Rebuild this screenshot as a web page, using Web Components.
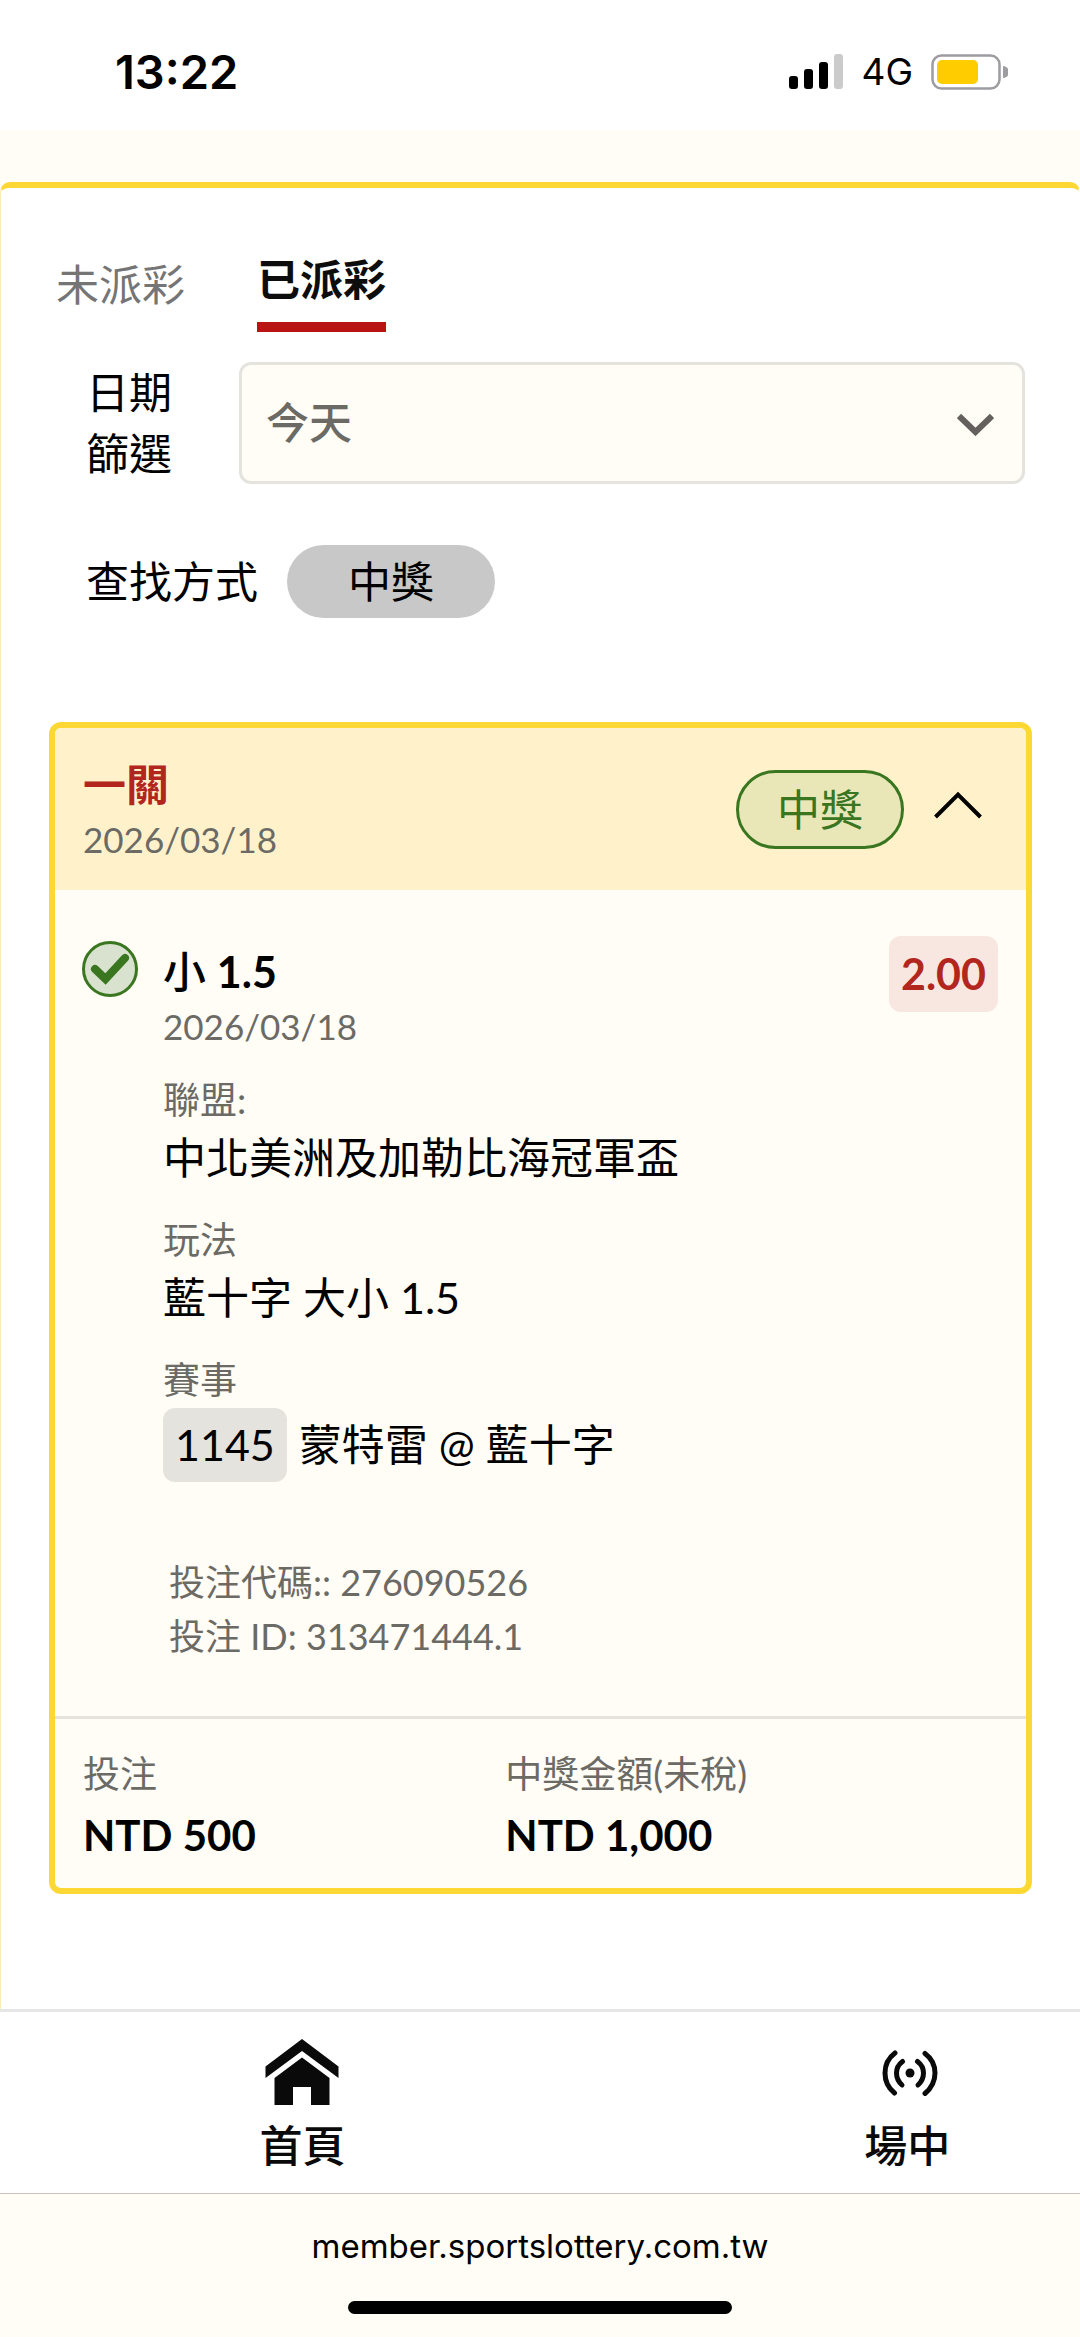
<!DOCTYPE html>
<html lang="zh-Hant">
<head>
<meta charset="utf-8">
<meta name="viewport" content="width=device-width, initial-scale=1">
<title>投注紀錄</title>
<style>
    html {
        background-color: #fffdf6;
    }

    body {
        margin: 0;
        min-height: 100vh;
        display: flex;
        flex-direction: column;
        overflow-x: hidden;
        font-family: Lato, 'Noto Sans CJK TC', sans-serif;
        font-size: 43px;
        line-height: 60px;
        color: black;
        --yellow: #fdd835;
        --cream: #fffdf6;
        --green: #39761f;
        --red: #b3261e;
        --grey: #6b6a65;
        --line: #e4e3de;
    }
</style>
</head>
<body>
    <status-bar time="13:22" network="4G"></status-bar>

    <bet-panel>
        <bet-tabs slot="tabs">
            <bet-tab>未派彩</bet-tab>
            <bet-tab selected>已派彩</bet-tab>
        </bet-tabs>

        <date-filter slot="filters" label="日期篩選" value="今天"></date-filter>
        <search-filter slot="filters" label="查找方式">中獎</search-filter>

        <bet-card title-text="一關" date="2026/03/18" status="中獎">
            <bet-selection date="2026/03/18" odds="2.00">
                <span slot="title">小 <b>1.5</b></span>
                <bet-field label="聯盟:">中北美洲及加勒比海冠軍盃</bet-field>
                <bet-field label="玩法">藍十字 大小 1.5</bet-field>
                <bet-field label="賽事" code="1145">蒙特雷 @ 藍十字</bet-field>
                <div slot="codes">投注代碼:: 276090526</div>
                <div slot="codes">投注 ID: 313471444.1</div>
            </bet-selection>
            <bet-amount slot="footer" label="投注">NTD 500</bet-amount>
            <bet-amount slot="footer" label="中獎金額(未稅)">NTD 1,000</bet-amount>
        </bet-card>
    </bet-panel>

    <nav-bar>
        <nav-item href="#home">
            <svg slot="icon" width="74" height="67" viewBox="0 0 74 67" fill="#0a0a0a" aria-hidden="true">
                <path d="M37 0 73.500 27.500V39L37 12 .5 39V27.500z"/>
                <path d="M37 18.500 64.500 39V66H46V48H28V66H9.500V39z"/>
            </svg>
            首頁
        </nav-item>
        <nav-item href="#live">
            <svg slot="icon" width="62" height="46" viewBox="-6 0 62 46" fill="none" stroke="#0a0a0a" stroke-width="5" stroke-linecap="round" aria-hidden="true">
                <circle cx="28" cy="23" r="4.500" fill="#0a0a0a" stroke="none"/>
                <path d="M20.500 11.500Q14.500 16 14.500 23T20 35M35.500 11.500Q41.500 16 41.500 23T36 35"/>
                <path d="M13 3Q3 10.500 3 23T12.500 43M43 3.500Q53 11 53 23T43 43.500"/>
            </svg>
            場中
        </nav-item>
    </nav-bar>

    <browser-bar>member.sportslottery.com.tw</browser-bar>

<script>
class StatusBarElement extends HTMLElement {
    // property
    // .. time
    // .. network

    constructor() {
        super();

        const shadowRoot = this.attachShadow({ mode: 'open' });
        shadowRoot.innerHTML = `
        <style>
            :host {
                display: flex;
                justify-content: space-between;
                align-items: center;
                box-sizing: border-box;
                height: 130px;
                padding: 13px 72px 0px 115px;
                background-color: white;
                font-family: Inter, sans-serif;
            }

            #time {
                font-size: 47px;
                font-weight: 600;
            }

            .indicators {
                display: flex;
                align-items: center;
                gap: 18px;
                font-size: 37px;
            }

            svg {
                display: block;
            }
        </style>
        <div id="time"></div>
        <div class="indicators">
            <svg width="54" height="35" viewBox="0 0 54 35" aria-hidden="true">
                <rect x="0" y="22" width="9" height="13" rx="3"/>
                <rect x="15" y="15" width="9" height="20" rx="3"/>
                <rect x="30" y="8" width="9" height="27" rx="3"/>
                <rect x="45" y="0" width="9" height="35" rx="3" fill="#cbcbcb"/>
            </svg>
            <span id="network"></span>
            <svg width="77" height="36" viewBox="0 0 77 36" aria-hidden="true">
                <rect x="1.500" y="1.500" width="67" height="33" rx="9" fill="none" stroke="#9c9ca1" stroke-width="2.500"/>
                <rect x="6" y="6" width="41" height="24" rx="5" fill="#ffcc00"/>
                <path d="M72 12a6 6 0 0 1 0 12z" fill="#9c9ca1"/>
            </svg>
        </div>
        `;
    }
    connectedCallback() {
        this.shadowRoot.getElementById('time').textContent = this.getAttribute('time');
        this.shadowRoot.getElementById('network').textContent = this.getAttribute('network');
    }
}

class BetPanelElement extends HTMLElement {
    constructor() {
        super();

        const shadowRoot = this.attachShadow({ mode: 'open' });
        shadowRoot.innerHTML = `
        <style>
            :host {
                display: block;
                flex: 1;
                margin-top: 52px;
                background-color: white;
                border: solid var(--yellow);
                border-width: 6px 1px 0px;
                border-left-color: #faeeb4;
                border-right-color: white;
                border-radius: 10px 10px 0px 0px;
            }

            header {
                padding: 62px 54px 0px 55px;
            }

            .filters {
                display: flex;
                flex-direction: column;
                gap: 61px;
                padding-top: 30px;
                padding-left: 30px;
            }

            main {
                padding: 104px 47px 115px 48px;
            }
        </style>
        <header>
            <slot name="tabs"></slot>
            <div class="filters"><slot name="filters"></slot></div>
        </header>
        <main><slot></slot></main>
        `;
    }
}

class BetTabsElement extends HTMLElement {
    constructor() {
        super();

        const shadowRoot = this.attachShadow({ mode: 'open' });
        shadowRoot.innerHTML = `
        <style>
            :host {
                display: block;
            }

            .bet-tabs-element {
                display: flex;
                align-items: center;
                gap: 72px;
            }
        </style>
        <div class="bet-tabs-element"><slot></slot></div>
        `;
    }
}

class BetTabElement extends HTMLElement {
    // property
    // .. selected

    constructor() {
        super();

        const shadowRoot = this.attachShadow({ mode: 'open' });
        shadowRoot.innerHTML = `
        <style>
            :host {
                display: block;
            }

            button {
                display: block;
                margin: 0px;
                padding: 0px 0px 12px;
                border: 0px;
                background: none;
                font: inherit;
                color: #757575;
            }

            :host([selected]) button {
                border-bottom: 10px solid #b81414;
                color: #0d0d0d;
                font-weight: 600;
            }
        </style>
        <button type="button"><slot></slot></button>
        `;
    }
}

class DateFilterElement extends HTMLElement {
    // property
    // .. label
    // .. value

    constructor() {
        super();

        const shadowRoot = this.attachShadow({ mode: 'open' });
        shadowRoot.innerHTML = `
        <style>
            :host {
                display: flex;
                align-items: center;
                gap: 67px;
            }

            label {
                flex: 0 0 2em;
                line-height: 61px;
            }

            .select {
                flex: 1;
                display: grid;
                align-items: center;
            }

            select {
                grid-area: 1 / 1;
                appearance: none;
                width: 100%;
                height: 122px;
                padding: 0px 96px 0px 24px;
                border: 3px solid var(--line);
                border-radius: 12px;
                background-color: var(--cream);
                color: var(--grey);
                font: inherit;
                font-weight: 500;
            }

            svg {
                grid-area: 1 / 1;
                justify-self: end;
                margin-right: 31px;
                pointer-events: none;
            }
        </style>
        <label for="date"></label>
        <div class="select">
            <select id="date"><option></option></select>
            <svg width="37" height="26" viewBox="0 0 37 26" fill="none" stroke="#62615d" stroke-width="6" aria-hidden="true">
                <path d="M2 6 18.500 22 35 6"/>
            </svg>
        </div>
        `;
    }
    connectedCallback() {
        this.shadowRoot.querySelector('label').textContent = this.getAttribute('label');
        this.shadowRoot.querySelector('option').textContent = this.getAttribute('value');
    }
}

class SearchFilterElement extends HTMLElement {
    // property
    // .. label

    constructor() {
        super();

        const shadowRoot = this.attachShadow({ mode: 'open' });
        shadowRoot.innerHTML = `
        <style>
            :host {
                display: flex;
                align-items: center;
                gap: 29px;
            }

            button {
                height: 73px;
                padding: 0px 61px;
                border: 0px;
                border-radius: 37px;
                background-color: #c8c8c8;
                color: black;
                font: inherit;
            }
        </style>
        <span id="label"></span>
        <button type="button" aria-describedby="label"><slot></slot></button>
        `;
    }
    connectedCallback() {
        this.shadowRoot.getElementById('label').textContent = this.getAttribute('label');
    }
}

class BetCardElement extends HTMLElement {
    // property
    // .. title-text
    // .. date
    // .. status

    constructor() {
        super();

        const shadowRoot = this.attachShadow({ mode: 'open' });
        shadowRoot.innerHTML = `
        <style>
            :host {
                display: block;
                border: 6px solid var(--yellow);
                border-radius: 12px;
                background-color: var(--cream);
                overflow: hidden;
            }

            header {
                display: flex;
                align-items: center;
                gap: 30px;
                padding: 27px 44px 27px 28px;
                background-color: #fff2cb;
            }

            .heading {
                flex: 1;
            }

            h2 {
                margin: 0px;
                font-size: 43px;
                font-weight: 700;
                color: var(--red);
            }

            #date {
                font-size: 35px;
                line-height: 48px;
                color: var(--grey);
            }

            #status {
                padding: 0px 38px;
                border: 3px solid var(--green);
                border-radius: 40px;
                background-color: #e9e7b8;
                color: var(--green);
                line-height: 73px;
            }

            button {
                display: block;
                padding: 0px;
                border: 0px;
                background: none;
            }

            svg {
                display: block;
            }

            footer {
                display: grid;
                grid-template-columns: 6fr 7fr;
                padding: 27px 28px 20px;
                border-top: 3px solid var(--line);
            }
        </style>
        <header>
            <div class="heading">
                <h2 id="title-text"></h2>
                <div id="date"></div>
            </div>
            <span id="status"></span>
            <button type="button" id="toggle" aria-label="收合">
                <svg width="48" height="36" viewBox="0 0 48 36" fill="none" stroke="black" stroke-width="4" aria-hidden="true">
                    <path d="M1.500 26 24 3.500 46.500 26"/>
                </svg>
            </button>
        </header>
        <slot></slot>
        <footer><slot name="footer"></slot></footer>
        `;
    }
    connectedCallback() {
        for (const name of ['title-text', 'date', 'status']) {
            this.shadowRoot.getElementById(name).textContent = this.getAttribute(name);
        }
    }
}

class BetSelectionElement extends HTMLElement {
    // property
    // .. date
    // .. odds

    constructor() {
        super();

        const shadowRoot = this.attachShadow({ mode: 'open' });
        shadowRoot.innerHTML = `
        <style>
            :host {
                display: flex;
                align-items: flex-start;
                padding: 46px 28px 53px 27px;
            }

            svg {
                flex: none;
                margin-top: 5px;
                margin-right: 25px;
            }

            .content {
                flex: 1;
                padding-top: 6px;
            }

            h3 {
                margin: 0px;
                font-size: 43px;
                font-weight: 500;
            }

            #date {
                font-size: 35px;
                line-height: 48px;
                color: var(--grey);
            }

            .fields {
                display: flex;
                flex-direction: column;
                gap: 24px;
                padding-top: 22px;
            }

            .codes {
                padding-top: 73px;
                padding-left: 6px;
                font-size: 36px;
                line-height: 54px;
                color: var(--grey);
            }

            #odds {
                padding: 0px 12px;
                border-radius: 12px;
                background-color: #f7e7e0;
                color: var(--red);
                font-weight: 700;
                line-height: 76px;
            }
        </style>
        <svg width="56" height="56" viewBox="0 0 56 56" aria-hidden="true">
            <circle cx="28" cy="28" r="26.500" fill="#d8e2cf" stroke="#39761f" stroke-width="3"/>
            <path d="M13 28 23.500 38 43 17" fill="none" stroke="#39761f" stroke-width="8" stroke-linecap="round"/>
        </svg>
        <div class="content">
            <h3><slot name="title"></slot></h3>
            <div id="date"></div>
            <div class="fields"><slot></slot></div>
            <div class="codes"><slot name="codes"></slot></div>
        </div>
        <span id="odds"></span>
        `;
    }
    connectedCallback() {
        for (const name of ['date', 'odds']) {
            this.shadowRoot.getElementById(name).textContent = this.getAttribute(name);
        }
    }
}

class BetFieldElement extends HTMLElement {
    // property
    // .. label
    // .. code (shown in a box before the value)

    constructor() {
        super();

        const shadowRoot = this.attachShadow({ mode: 'open' });
        shadowRoot.innerHTML = `
        <style>
            :host {
                display: block;
            }

            #label {
                font-size: 37px;
                line-height: 56px;
                color: var(--grey);
            }

            .value {
                display: flex;
                align-items: center;
                gap: 12px;
            }

            #code {
                padding: 0px 12px;
                border-radius: 12px;
                background-color: #e5e3dd;
                line-height: 74px;
            }

            #code:empty {
                display: none;
            }
        </style>
        <div id="label"></div>
        <div class="value"><span id="code"></span><span><slot></slot></span></div>
        `;
    }
    connectedCallback() {
        this.shadowRoot.getElementById('label').textContent = this.getAttribute('label');
        this.shadowRoot.getElementById('code').textContent = this.getAttribute('code');
    }
}

class BetAmountElement extends HTMLElement {
    // property
    // .. label

    constructor() {
        super();

        const shadowRoot = this.attachShadow({ mode: 'open' });
        shadowRoot.innerHTML = `
        <style>
            :host {
                display: block;
            }

            #label {
                font-size: 37px;
                line-height: 56px;
                color: var(--grey);
            }

            .value {
                font-size: 42px;
                font-weight: 700;
                line-height: 66px;
            }
        </style>
        <div id="label"></div>
        <div class="value"><slot></slot></div>
        `;
    }
    connectedCallback() {
        this.shadowRoot.getElementById('label').textContent = this.getAttribute('label');
    }
}

class NavBarElement extends HTMLElement {
    constructor() {
        super();

        const shadowRoot = this.attachShadow({ mode: 'open' });
        shadowRoot.innerHTML = `
        <style>
            :host {
                display: block;
                background-color: white;
                border-top: 3px solid #e6e6e6;
                border-bottom: 1px solid #c8c5bc;
            }

            nav {
                display: flex;
                overflow: hidden;
            }

            ::slotted(nav-item) {
                flex: 0 0 56%;
            }
        </style>
        <nav><slot></slot></nav>
        `;
    }
}

class NavItemElement extends HTMLElement {
    // property
    // .. href

    constructor() {
        super();

        const shadowRoot = this.attachShadow({ mode: 'open' });
        shadowRoot.innerHTML = `
        <style>
            :host {
                display: block;
            }

            a {
                display: flex;
                flex-direction: column;
                align-items: center;
                gap: 10px;
                padding: 27px 0px 17px;
                color: #0a0a0a;
                font-weight: 500;
                text-decoration: none;
            }

            .icon {
                display: flex;
                align-items: center;
                height: 67px;
            }
        </style>
        <a><span class="icon"><slot name="icon"></slot></span><span><slot></slot></span></a>
        `;
    }
    connectedCallback() {
        this.shadowRoot.querySelector('a').setAttribute('href', this.getAttribute('href'));
    }
}

class BrowserBarElement extends HTMLElement {
    constructor() {
        super();

        const shadowRoot = this.attachShadow({ mode: 'open' });
        shadowRoot.innerHTML = `
        <style>
            :host {
                display: flex;
                flex-direction: column;
                align-items: center;
                gap: 35px;
                padding: 32px 0px 23px;
                background-color: var(--cream);
                font-family: Inter, sans-serif;
                font-size: 33px;
                line-height: 40px;
            }

            .home-indicator {
                width: 384px;
                height: 13px;
                border-radius: 7px;
                background-color: black;
            }
        </style>
        <div><slot></slot></div>
        <div class="home-indicator"></div>
        `;
    }
}

window.customElements.define('status-bar', StatusBarElement);
window.customElements.define('bet-panel', BetPanelElement);
window.customElements.define('bet-tabs', BetTabsElement);
window.customElements.define('bet-tab', BetTabElement);
window.customElements.define('date-filter', DateFilterElement);
window.customElements.define('search-filter', SearchFilterElement);
window.customElements.define('bet-card', BetCardElement);
window.customElements.define('bet-selection', BetSelectionElement);
window.customElements.define('bet-field', BetFieldElement);
window.customElements.define('bet-amount', BetAmountElement);
window.customElements.define('nav-bar', NavBarElement);
window.customElements.define('nav-item', NavItemElement);
window.customElements.define('browser-bar', BrowserBarElement);
</script>
</body>
</html>
